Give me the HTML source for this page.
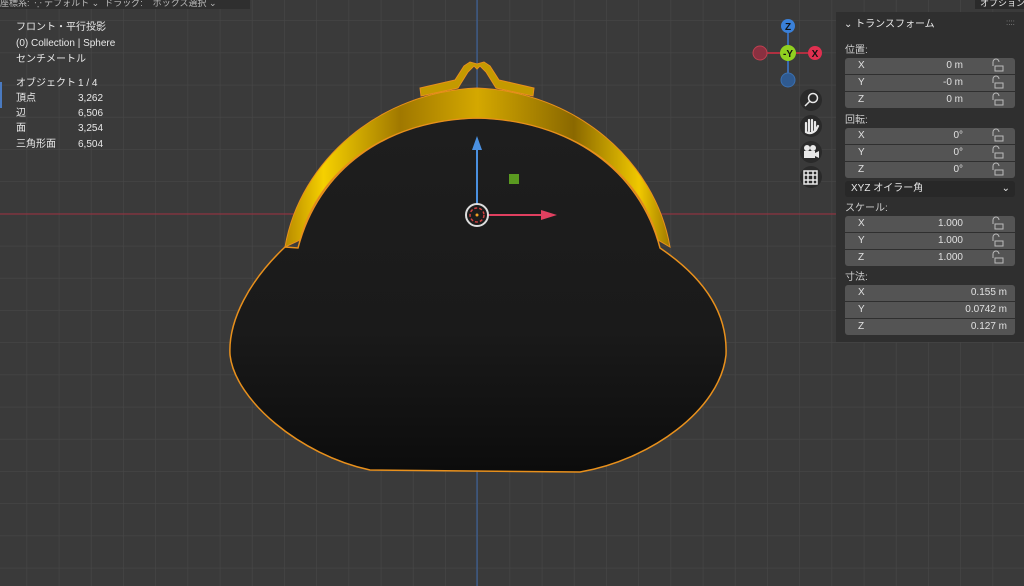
<!DOCTYPE html>
<html><head><meta charset="utf-8"><style>
*{margin:0;padding:0;box-sizing:border-box}
body{width:1024px;height:586px;overflow:hidden;background:#3a3a3a;font-family:"Liberation Sans","Noto Sans CJK JP",sans-serif;color:#e6e6e6;position:relative}
.t{position:absolute;font-size:10px;line-height:12px;color:#e8e8e8;white-space:nowrap;margin-top:7px}
.panel{position:absolute;left:836px;top:12px;width:188px;height:330px;background:#2f2f2f}
.lab{position:absolute;font-size:10px;line-height:12px;color:#cfcfcf;margin-top:6px}
.f{position:absolute;left:845px;width:170px;height:16px;background:#545454;font-size:10px;line-height:16px;color:#e0e0e0}
.f span{position:absolute;left:13px;top:0}
.f b{position:absolute;right:52px;top:0;font-weight:normal}
.f.w b{right:8px}
</style></head><body>
<svg width="1024" height="586" style="position:absolute;left:0;top:0">
<defs>
<pattern id="g" x="-5" y="21" width="32.2" height="32.2" patternUnits="userSpaceOnUse"><path d="M32.2 0V32.2M0 32.2H32.2" stroke="#474747" stroke-width="1.2"/></pattern>
<linearGradient id="gold" x1="0" y1="0" x2="1" y2="0"><stop offset="0" stop-color="#b88a00"/><stop offset=".1" stop-color="#f5d000"/><stop offset=".3" stop-color="#a07800"/><stop offset=".5" stop-color="#d4a800"/><stop offset=".75" stop-color="#8a6800"/><stop offset=".92" stop-color="#f0c800"/><stop offset="1" stop-color="#a07a00"/></linearGradient>
<linearGradient id="lea" x1="0" y1="0" x2="0" y2="1"><stop offset="0" stop-color="#1e1e1e"/><stop offset=".6" stop-color="#1a1a1a"/><stop offset="1" stop-color="#0c0c0c"/></linearGradient>
</defs>
<rect width="1024" height="586" fill="#3a3a3a"/>
<rect width="1024" height="586" fill="url(#g)"/>
<line x1="0" y1="214" x2="1024" y2="214" stroke="#a03040" stroke-width="1"/>
<line x1="477" y1="0" x2="477" y2="586" stroke="#3a66a8" stroke-width="1"/>
<path d="M298 248 C318 170 385 120 477 118 C570 120 640 170 660 248 C700 275 728 310 726 355 C720 410 650 460 580 472 L370 470 C300 455 235 400 230 355 C228 320 250 280 285 247 Z" fill="url(#lea)" stroke="#e8901c" stroke-width="1.5"/>
<path d="M420 88 L421 96 L458 88 L468 72 L474 66 L477 69 L480 66 L486 72 L496 88 L533 96 L534 88 L499 80 L490 66 L484 62 L477 64 L470 62 L464 66 L455 80 Z" fill="#c49a00" stroke="#e8901c" stroke-width="1"/>
<path d="M285 247 C300 160 380 92 477 88 C575 92 655 160 670 247 L658 240 C640 170 570 120 477 118 C385 120 318 170 300 240 Z" fill="url(#gold)" stroke="#e8901c" stroke-width="1"/>
<line x1="477" y1="205" x2="477" y2="145" stroke="#4a90e0" stroke-width="2"/>
<path d="M472 150 L477 136 L482 150Z" fill="#4a90e0"/>
<line x1="487" y1="215" x2="545" y2="215" stroke="#e04060" stroke-width="2"/>
<path d="M541 210 L557 215 L541 220Z" fill="#e04060"/>
<rect x="509" y="174" width="10" height="10" fill="#5a9a20"/>
<circle cx="477" cy="215" r="11" fill="none" stroke="#ddd" stroke-width="2"/>
<circle cx="477" cy="215" r="7" fill="none" stroke="#d04040" stroke-width="1.5" stroke-dasharray="3 2"/>
<circle cx="477" cy="215" r="1.5" fill="#f0a020"/>
<line x1="788" y1="26" x2="788" y2="80" stroke="#3a6ab0" stroke-width="2"/>
<line x1="760" y1="53" x2="815" y2="53" stroke="#b03040" stroke-width="2"/>
<circle cx="788" cy="26" r="7" fill="#3a80d8"/><text x="788" y="30" font-size="10" fill="#111" text-anchor="middle" font-family="Liberation Sans" font-weight="bold">Z</text>
<circle cx="760" cy="53" r="7" fill="#8a3040" stroke="#c04050"/>
<circle cx="815" cy="53" r="7" fill="#e03050"/><text x="815" y="57" font-size="10" fill="#111" text-anchor="middle" font-family="Liberation Sans" font-weight="bold">X</text>
<circle cx="788" cy="80" r="7" fill="#2f5a90" stroke="#3a70b0"/>
<circle cx="788" cy="53" r="8" fill="#90d020"/><text x="788" y="57" font-size="10" fill="#111" text-anchor="middle" font-family="Liberation Sans" font-weight="bold">-Y</text>
<g fill="#2a2a2a"><circle cx="811" cy="100" r="11"/><circle cx="811" cy="126" r="11"/><circle cx="811" cy="152" r="11"/><circle cx="811" cy="177" r="11"/></g>
<g stroke="#e8e8e8" fill="none" stroke-width="1.5"><circle cx="813" cy="98" r="4.5"/><line x1="810" y1="101" x2="805" y2="106"/>
<rect x="804" y="171" width="13" height="13"/><path d="M808 171V184M813 171V184M804 175H817M804 180H817"/></g>
<path d="M806 132 L806 123 M809 131 L809 120 M812 131 L812 120 M815 131 L815 122 M806 132 Q811 135 816 130 L818 126" stroke="#e8e8e8" stroke-width="2.2" fill="none" stroke-linecap="round"/>
<g fill="#e8e8e8"><circle cx="807" cy="148" r="3"/><circle cx="813" cy="148" r="3"/><rect x="804" y="151" width="11" height="7"/><path d="M815 153 L819 151 L819 158 L815 156Z"/></g>
</svg>
<div style="position:absolute;left:0;top:0;width:250px;height:9px;background:#2f2f2f"></div>
<div class="t" style="top:-10px;left:0;font-size:9px;color:#bbb">座標系: &nbsp;⁛ デフォルト ⌄ &nbsp;ドラッグ: &nbsp;&nbsp;&nbsp;ボックス選択 ⌄</div>
<div style="position:absolute;left:975px;top:0;width:49px;height:9px;background:#2a2a2a"></div>
<div class="t" style="top:-10px;left:980px;font-size:9px">オプション</div>
<div style="position:absolute;left:0;top:82px;width:2px;height:26px;background:#4a7ac0"></div>
<div class="t" style="left:16px;top:15px">フロント・平行投影</div>
<div class="t" style="left:16px;top:31px">(0) Collection | Sphere</div>
<div class="t" style="left:16px;top:47px">センチメートル</div>
<div class="t" style="left:16px;top:71px">オブジェクト</div><div class="t" style="left:78px;top:71px">1 / 4</div>
<div class="t" style="left:16px;top:86px">頂点</div><div class="t" style="left:78px;top:86px">3,262</div>
<div class="t" style="left:16px;top:101px">辺</div><div class="t" style="left:78px;top:101px">6,506</div>
<div class="t" style="left:16px;top:116px">面</div><div class="t" style="left:78px;top:116px">3,254</div>
<div class="t" style="left:16px;top:132px">三角形面</div><div class="t" style="left:78px;top:132px">6,504</div>
<div class="panel"></div>
<div class="t" style="left:844px;top:12px">⌄ トランスフォーム</div>
<div class="t" style="left:1006px;top:10px;color:#888;font-size:8px">::::</div>
<div class="lab" style="left:845px;top:39px">位置:</div>
<div class="f" style="top:58px;border-radius:3px 3px 0 0"><span>X</span><b>0 m</b></div>
<div class="f" style="top:75px"><span>Y</span><b>-0 m</b></div>
<div class="f" style="top:92px;border-radius:0 0 3px 3px"><span>Z</span><b>0 m</b></div>
<div class="lab" style="left:845px;top:109px">回転:</div>
<div class="f" style="top:128px;border-radius:3px 3px 0 0"><span>X</span><b>0°</b></div>
<div class="f" style="top:145px"><span>Y</span><b>0°</b></div>
<div class="f" style="top:162px;border-radius:0 0 3px 3px"><span>Z</span><b>0°</b></div>
<div style="position:absolute;left:845px;top:181px;width:170px;height:16px;background:#282828;border-radius:3px;font-size:10px;line-height:16px;padding:0 6px">XYZ オイラー角<span style="position:absolute;right:5px">⌄</span></div>
<div class="lab" style="left:845px;top:197px">スケール:</div>
<div class="f" style="top:216px;border-radius:3px 3px 0 0"><span>X</span><b>1.000</b></div>
<div class="f" style="top:233px"><span>Y</span><b>1.000</b></div>
<div class="f" style="top:250px;border-radius:0 0 3px 3px"><span>Z</span><b>1.000</b></div>
<div class="lab" style="left:845px;top:266px">寸法:</div>
<div class="f w" style="top:285px;border-radius:3px 3px 0 0"><span>X</span><b>0.155 m</b></div>
<div class="f w" style="top:302px"><span>Y</span><b>0.0742 m</b></div>
<div class="f w" style="top:319px;border-radius:0 0 3px 3px"><span>Z</span><b>0.127 m</b></div>
<svg width="1024" height="586" style="position:absolute;left:0;top:0;pointer-events:none">
<g stroke="#bbb" fill="none" stroke-width="1">
<g id="l"><path d="M993 66 V62 A3 3 0 0 1 999 62"/><rect x="995" y="66" width="8" height="5"/></g>
<use href="#l" y="17"/><use href="#l" y="34"/><use href="#l" y="70"/><use href="#l" y="87"/><use href="#l" y="104"/><use href="#l" y="158"/><use href="#l" y="175"/><use href="#l" y="192"/>
</g></svg>
</body></html>
